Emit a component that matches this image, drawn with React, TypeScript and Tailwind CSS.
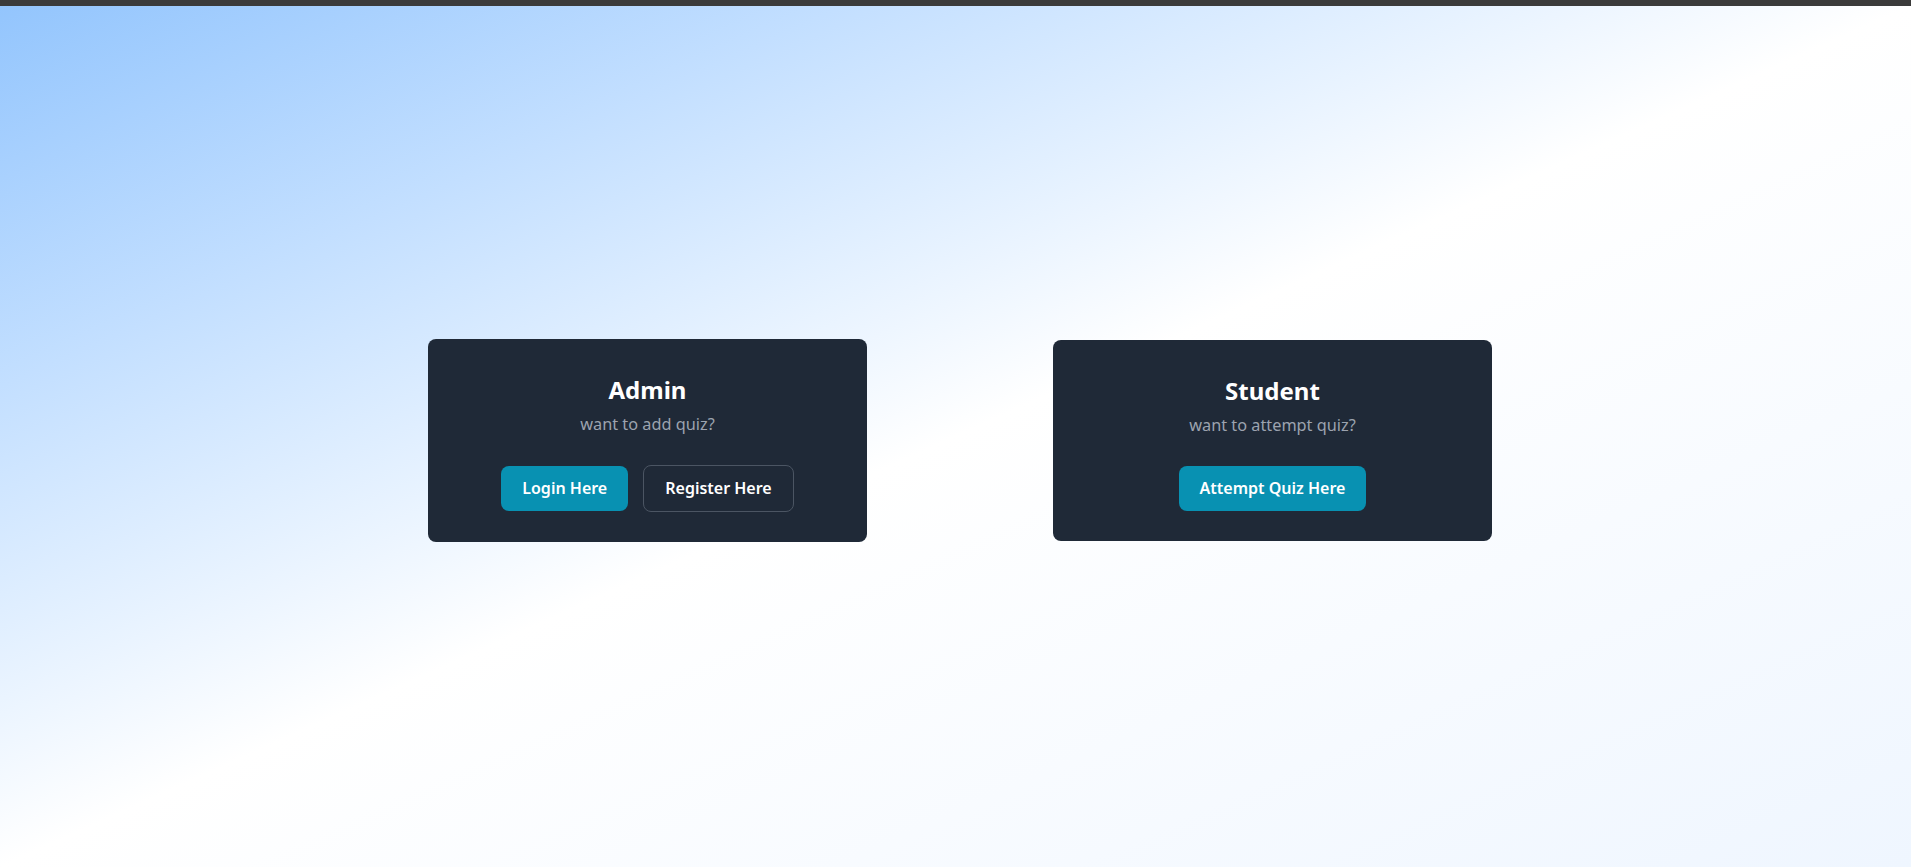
import React from "react";

const font = { fontFamily: '"Noto Sans", "Open Sans", sans-serif' };

function Card({
  title,
  subtitle,
  children,
}: {
  title: string;
  subtitle: string;
  children: React.ReactNode;
}) {
  return (
    <div className="w-[439px] rounded-lg bg-[#1f2937] pt-[35px] pb-[30px] flex flex-col items-center">
      <h2 className="text-2xl leading-8 font-bold text-white">{title}</h2>
      <p className="mt-[6px] text-[16.3px] leading-6 text-[#9ca3af]">{subtitle}</p>
      <div className="mt-[29px] flex items-center justify-center gap-[15px]">{children}</div>
    </div>
  );
}

export default function App() {
  return (
    <div className="min-h-screen flex flex-col" style={font}>
      <div className="h-[6px] bg-[#3b3b3b]" />
      <div className="flex-1 flex items-center justify-center gap-[186px] pl-[9px] pt-[8px] bg-gradient-to-br from-[#93c5fd] via-white to-[#eff6ff] min-h-[861px]">
        <Card title="Admin" subtitle="want to add quiz?">
          <button className="px-[21px] py-[10px] leading-[25px] rounded-lg bg-[#0891b2] text-white font-semibold text-base">
            Login Here
          </button>
          <button className="px-[21px] py-[10px] leading-[25px] rounded-lg border border-[#4b5563] text-white font-semibold text-base">
            Register Here
          </button>
        </Card>
        <Card title="Student" subtitle="want to attempt quiz?">
          <button className="px-[21px] py-[10px] leading-[25px] rounded-lg bg-[#0891b2] text-white font-semibold text-base">
            Attempt Quiz Here
          </button>
        </Card>
      </div>
    </div>
  );
}
